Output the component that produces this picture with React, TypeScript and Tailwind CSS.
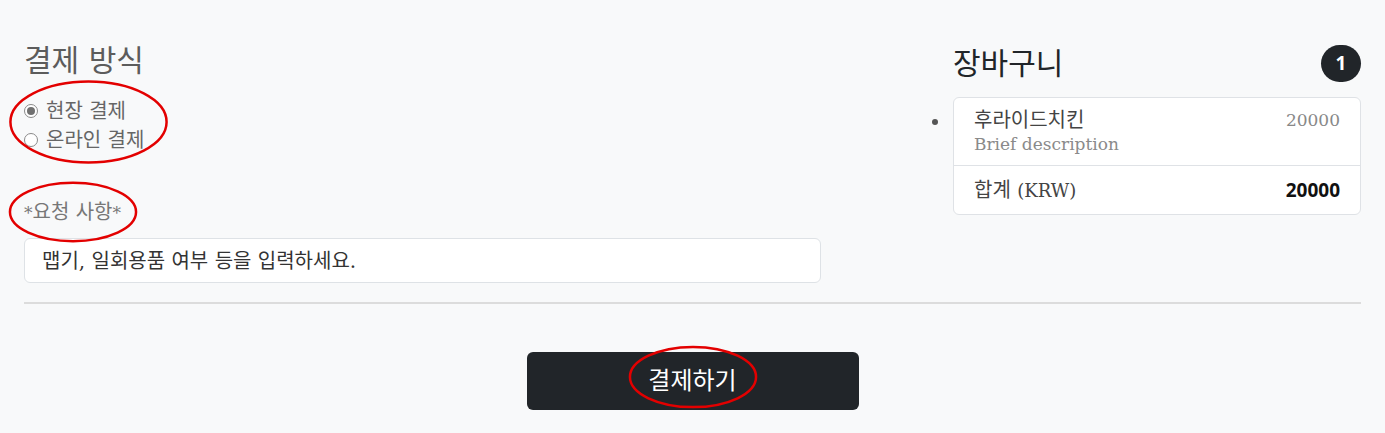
const serif = "font-['DejaVu_Serif','Noto_Sans_CJK_KR',serif]";

function Ellipse({ className }: { className: string }) {
  return (
    <svg className={`pointer-events-none absolute ${className}`} viewBox="0 0 100 100" preserveAspectRatio="none">
      <ellipse cx="50" cy="50" rx="48.5" ry="47" fill="none" stroke="#e30000" strokeWidth="2.5" vectorEffect="non-scaling-stroke" />
    </svg>
  );
}

function Radio({ checked, label }: { checked?: boolean; label: string }) {
  return (
    <label className="flex h-[29px] items-center gap-[8px]">
      <span className="flex h-[14px] w-[14px] items-center justify-center rounded-full border border-[#8a8a8a] bg-white">
        {checked && <span className="h-[8px] w-[8px] rounded-full bg-[#707070]" />}
      </span>
      <span className="text-[20px] text-[#666]">{label}</span>
    </label>
  );
}

export default function App() {
  return (
    <div className={`relative h-[433px] w-[1385px] overflow-hidden bg-[#f8f9fa] ${serif}`}>
      <div className="flex px-6 pt-[40px]">
        <div className="w-[797px]">
          <h2 className="h-[42px] text-[30px] leading-[42px] text-[#5c5c5c]">결제 방식</h2>
          <div className="mt-[14px]">
            <Radio checked label="현장 결제" />
            <Radio label="온라인 결제" />
          </div>
          <div className="mt-[44px] text-[20px] leading-[28px] text-[#777]">
            <span className="text-[17px]">*</span>요청 사항<span className="text-[17px]">*</span>
          </div>
          <div className="mt-[11px] flex h-[45px] items-center rounded-md border border-[#dee2e6] bg-white px-[17px] text-[20px] text-[#333]">
            맵기, 일회용품 여부 등을 입력하세요.
          </div>
        </div>
        <div className="ml-[132px] flex-1">
          <div className="flex h-[46px] items-center justify-between">
            <h2 className="text-[30px] text-[#212529]">장바구니</h2>
            <span className="flex h-[37px] w-[40px] items-center justify-center rounded-full bg-[#212529] font-['Open_Sans',sans-serif] text-[19px] font-bold text-white">
              1
            </span>
          </div>
          <div className="relative mt-[11px] rounded-md border border-[#dfe2e6] bg-white">
            <span className="absolute left-[-22px] top-[21px] h-[6px] w-[6px] rounded-full bg-[#555]" />
            <div className="flex justify-between border-b border-[#dfe2e6] px-5 pb-[9px] pt-[10px]">
              <div>
                <div className="text-[20px] leading-[24px] text-[#444]">후라이드치킨</div>
                <div className="text-[17px] leading-[24px] text-[#8a8a8a]">Brief description</div>
              </div>
              <div className="text-[17px] leading-[24px] text-[#888]">20000</div>
            </div>
            <div className="flex h-[48px] items-center justify-between px-5">
              <span className="text-[20px] text-[#444]">
                합계 <span className="text-[18px]">(KRW)</span>
              </span>
              <span className="font-['Open_Sans',sans-serif] text-[19px] font-bold text-[#111]">20000</span>
            </div>
          </div>
        </div>
      </div>
      <div className="mx-6 mt-[19px] h-0 border-t-2 border-[#dcdcdc]" />
      <div className="mt-[48px] flex justify-center">
        <button className="h-[58px] w-[332px] rounded-md bg-[#212529] text-[24px] text-white">결제하기</button>
      </div>
      <Ellipse className="left-[8px] top-[79px] h-[86px] w-[161px]" />
      <Ellipse className="left-[8px] top-[181px] h-[62px] w-[130px]" />
      <Ellipse className="left-[628px] top-[345px] h-[64px] w-[130px]" />
    </div>
  );
}
